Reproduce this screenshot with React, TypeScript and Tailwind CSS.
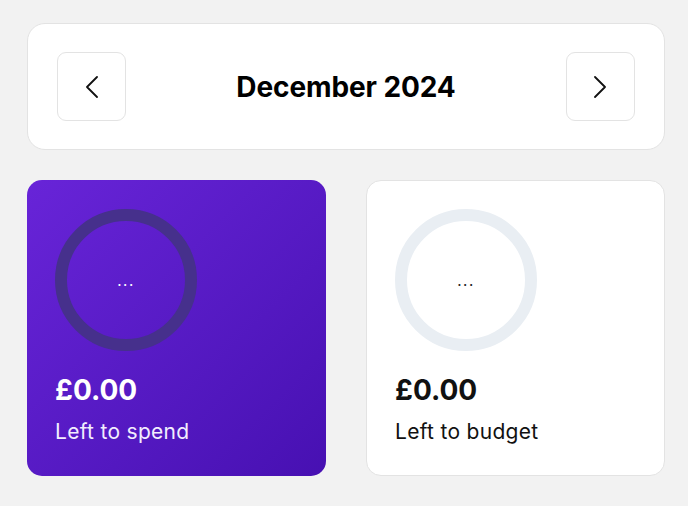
import React from 'react'

function Chevron({ dir }: { dir: 'left' | 'right' }) {
    return (
        <svg width="16" height="22" viewBox="0 0 16 22" fill="none" stroke="currentColor" strokeWidth="1.8" strokeLinecap="round" strokeLinejoin="round">
            {dir === 'left' ? <polyline points="13,1 3,11 13,21" /> : <polyline points="3,1 13,11 3,21" />}
        </svg>
    )
}

function Ring({ track, dots }: { track: string; dots: string }) {
    return (
        <div className="relative w-[142px] h-[142px]">
            <svg width="142" height="142" viewBox="0 0 142 142">
                <circle cx="71" cy="71" r="65" fill="none" stroke={track} strokeWidth="12" />
            </svg>
            <div className={`absolute inset-0 flex items-center justify-center pt-[2px] text-[15px] tracking-[1.5px] ${dots}`}>...</div>
        </div>
    )
}

export default function App() {
    return (
        <div className="min-h-[506px] bg-[#f2f2f2] pl-[27px] pr-[23px] pt-[23px]" style={{ fontFamily: 'Inter, "Noto Sans", sans-serif' }}>
            <div className="bg-white border border-[#e3e3e3] rounded-[18px] h-[127px] flex items-center justify-between px-[29px]">
                <button className="w-[69px] h-[69px] border border-[#e3e3e3] rounded-[9px] flex items-center justify-center text-[#111]">
                    <Chevron dir="left" />
                </button>
                <h1 className="text-[28px] font-bold text-black tracking-[-0.1px]">December 2024</h1>
                <button className="w-[69px] h-[69px] border border-[#e3e3e3] rounded-[9px] flex items-center justify-center text-[#111]">
                    <Chevron dir="right" />
                </button>
            </div>

            <div className="grid grid-cols-2 gap-10 mt-[30px]">
                <div className="h-[296px] rounded-[15px] bg-gradient-to-br from-[#6824d8] to-[#4710b2] p-7 pt-[29px] text-white">
                    <Ring track="#46308c" dots="text-white" />
                    <div className="mt-[25px] text-[28px] font-bold leading-none">£0.00</div>
                    <div className="mt-[17px] text-[21px] leading-none tracking-[0.3px] text-[#f2eefe]">Left to spend</div>
                </div>
                <div className="h-[296px] rounded-[15px] bg-white border border-[#e3e3e3] p-7 pt-[28px] text-[#111]">
                    <Ring track="#e9eef3" dots="text-[#222]" />
                    <div className="mt-[25px] text-[28px] font-bold leading-none">£0.00</div>
                    <div className="mt-[17px] text-[21px] leading-none tracking-[0.3px]">Left to budget</div>
                </div>
            </div>
        </div>
    )
}
